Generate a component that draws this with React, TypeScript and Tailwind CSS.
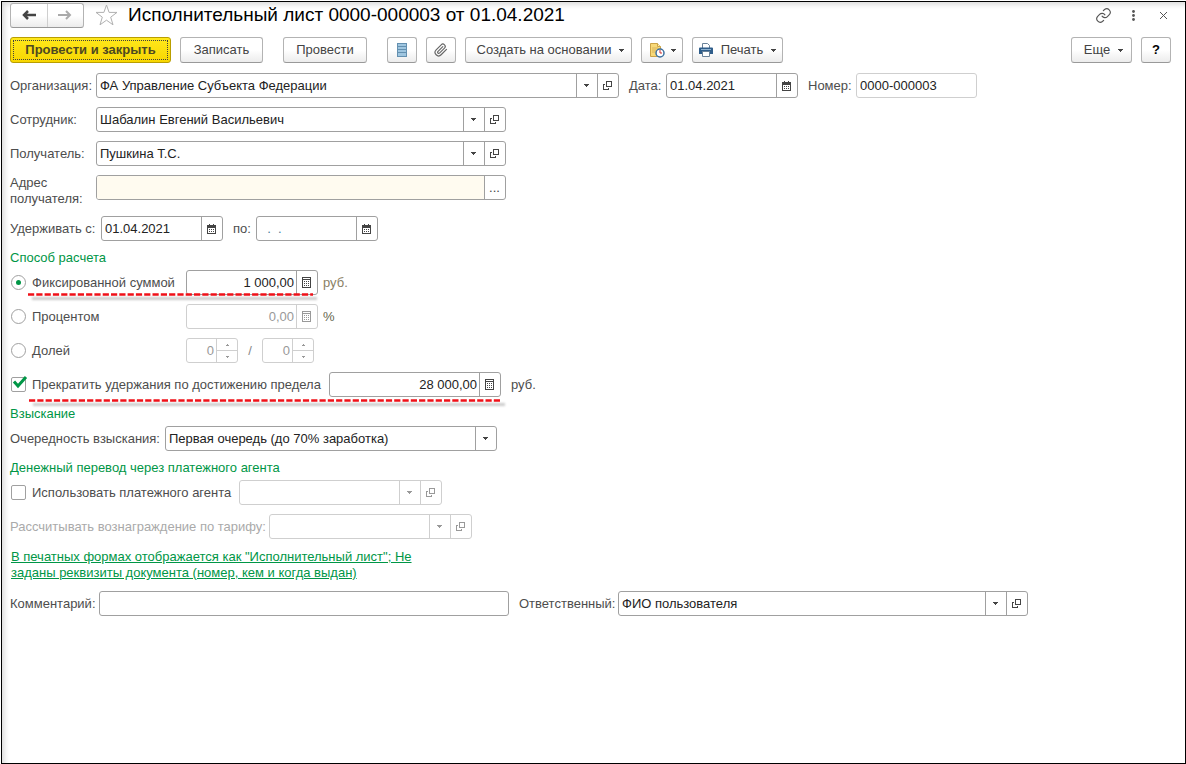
import { useState } from 'react'
import type { ReactNode } from 'react'

function Caret() {
  return (
    <svg width="5" height="3" viewBox="0 0 5 3" fill="currentColor" shapeRendering="crispEdges">
      <path d="M0 0h5v1H0zM1 1h3v1H1zM2 2h1v1H2z" />
    </svg>
  )
}

function OpenIcon() {
  return (
    <svg width="10" height="10" viewBox="0 0 10 10" fill="none" stroke="currentColor" shapeRendering="crispEdges">
      <path d="M3.500.500h5v5h-5z" />
      <path d="M2 3.500H.500v5h5V7" />
    </svg>
  )
}

function CalendarIcon() {
  return (
    <svg width="10" height="10" viewBox="0 0 10 10" fill="currentColor" shapeRendering="crispEdges">
      <path d="M0 1h9v9H0zM1 4v5h7V4z" fillRule="evenodd" />
      <path d="M2 0h1v1H2zM6 0h1v1H6z" />
      <path d="M2 5h1v1H2zM4 5h1v1H4zM6 5h1v1H6zM2 7h1v1H2zM4 7h1v1H4zM6 7h1v1H6z" />
    </svg>
  )
}

function CalcIcon() {
  return (
    <svg width="10" height="11" viewBox="0 0 10 11" fill="currentColor" shapeRendering="crispEdges">
      <path d="M0 0h9v11H0zM1 3v7h7V3zM1 1v1h7V1z" fillRule="evenodd" />
      <path d="M2 4h1v1H2zM4 4h1v1H4zM6 4h1v1H6zM2 6h1v1H2zM4 6h1v1H4zM6 6h1v1H6zM2 8h1v1H2zM4 8h1v1H4zM6 8h1v1H6z" />
    </svg>
  )
}

interface FieldProps {
  id: string
  label?: string
  value?: string
  width: string
  disabled?: boolean
  light?: boolean
  inputClass?: string
  children?: ReactNode
}

function Field({ id, label, value = '', width, disabled, light, inputClass = 'px-[3px]', children }: FieldProps) {
  const [text, setText] = useState(value)
  const border = disabled || light ? 'border-[#cfcfcf]' : 'border-[#a0a0a0]'

  return (
    <div className={`flex h-[25px] max-w-full overflow-hidden rounded-[3px] border bg-white ${border} ${disabled ? 'text-[#999]' : 'text-[#222]'} ${width}`}>
      <input
        id={id}
        aria-label={label}
        value={text}
        disabled={disabled}
        onChange={e => setText(e.target.value)}
        className={`min-w-0 flex-1 outline-none ${inputClass}`}
      />
      {children}
    </div>
  )
}

function FieldButton({ title, disabled, children }: { title: string; disabled?: boolean; children: ReactNode }) {
  return (
    <button
      type="button"
      title={title}
      disabled={disabled}
      className={`flex w-[21px] shrink-0 items-center justify-center border-l pr-px ${
        disabled ? 'border-[#cfcfcf] text-[#999]' : 'border-[#a0a0a0] text-[#444]'
      }`}
    >
      {children}
    </button>
  )
}

function RefField(props: FieldProps) {
  return (
    <Field {...props}>
      <FieldButton title="Выбрать из списка" disabled={props.disabled}><Caret /></FieldButton>
      <FieldButton title="Открыть" disabled={props.disabled}><OpenIcon /></FieldButton>
    </Field>
  )
}

function DateField(props: FieldProps) {
  return (
    <Field {...props}>
      <FieldButton title="Календарь"><CalendarIcon /></FieldButton>
    </Field>
  )
}

function SumField(props: FieldProps) {
  return (
    <Field {...props} inputClass="pr-[2px] text-right">
      <FieldButton title="Калькулятор" disabled={props.disabled}><CalcIcon /></FieldButton>
    </Field>
  )
}

function SpinField(props: FieldProps) {
  return (
    <Field {...props} inputClass="pr-[2px] text-right">
      <div className="flex w-[21px] shrink-0 flex-col border-l border-[#cfcfcf]">
        <button type="button" title="Больше" disabled className="flex flex-1 items-center justify-center border-b border-[#cfcfcf]">
          <svg width="3" height="2" viewBox="0 0 3 2" fill="currentColor" shapeRendering="crispEdges">
            <path d="M1 0h1v1H1zM0 1h3v1H0z" />
          </svg>
        </button>
        <button type="button" title="Меньше" disabled className="flex flex-1 items-center justify-center">
          <svg width="3" height="2" viewBox="0 0 3 2" fill="currentColor" shapeRendering="crispEdges">
            <path d="M0 0h3v1H0zM1 1h1v1H1z" />
          </svg>
        </button>
      </div>
    </Field>
  )
}

function ToolButton({ title, width, children }: { title?: string; width: string; children: ReactNode }) {
  return (
    <button
      type="button"
      title={title}
      className={`flex h-[26px] shrink-0 items-center justify-center rounded-[3px] border border-[#b3b3b3] border-b-[#999] bg-linear-to-b from-white from-50% to-[#ececec] text-[#444] ${width}`}
    >
      {children}
    </button>
  )
}

function Radio({ id, checked, onChange, children }: { id: string; checked: boolean; onChange: () => void; children: ReactNode }) {
  return (
    <div className="flex w-[176px] shrink-0 items-center gap-[6px] pl-px">
      <input
        type="radio"
        id={id}
        name="method"
        checked={checked}
        onChange={onChange}
        className="grid size-[15px] shrink-0 appearance-none place-content-center rounded-full border border-[#a0a0a0] bg-white before:size-[5px] before:rounded-full checked:before:bg-[#009646]"
      />
      <label htmlFor={id}>{children}</label>
    </div>
  )
}

function Check({ id, checked, onChange, children }: { id: string; checked: boolean; onChange: (v: boolean) => void; children: ReactNode }) {
  return (
    <div className="flex shrink-0 items-center gap-[6px] pl-px">
      <span className="relative flex">
        <input
          type="checkbox"
          id={id}
          checked={checked}
          onChange={e => onChange(e.target.checked)}
          className="size-[15px] appearance-none rounded-[2px] border border-[#a0a0a0] bg-white"
        />
        {checked && (
          <svg className="pointer-events-none absolute left-0 -top-px" width="17" height="14" viewBox="0 0 17 14" fill="none" stroke="#009646" strokeWidth="3">
            <path d="M3 5.500l4 4.500 8-9" />
          </svg>
        )}
      </span>
      <label htmlFor={id}>{children}</label>
    </div>
  )
}

// red dashed marker under an important row
function Marker({ className }: { className: string }) {
  return (
    <div className={`pointer-events-none absolute ${className}`}>
      <div className="absolute top-1 left-1 h-[3px] w-full bg-black/20 blur-[1px]" />
      <svg className="relative block h-[3px] w-full">
        <line x1="0" y1="1.5" x2="100%" y2="1.5" stroke="#f01018" strokeWidth="2.500" strokeDasharray="6.200 2.100" />
      </svg>
    </div>
  )
}

function Heading({ children }: { children: ReactNode }) {
  return <h2 className="-mb-[5px] text-[#009646]">{children}</h2>
}

const row = 'flex items-center'

export default function App() {
  const [method, setMethod] = useState('fixed')
  const [stopAtLimit, setStopAtLimit] = useState(true)
  const [useAgent, setUseAgent] = useState(false)

  return (
    <div className="flex min-h-screen bg-white pt-px pl-px font-['Liberation_Sans',Arial,sans-serif] text-[13px] leading-4 text-[#4d4d4d]">
      <main className="flex-1 border border-black pr-[14px] pb-4 pl-2 pt-px shadow-[inset_6px_6px_6px_-4px_#d4d4d4]">
        <header className="flex h-6 items-center">
          <div className="flex h-[25px] w-[74px] shrink-0 rounded-[3px] border border-[#b3b3b3] border-b-[#999] bg-linear-to-b from-white from-50% to-[#ececec]">
            <button type="button" title="Назад" className="flex flex-1 items-center justify-center border-r border-[#cfcfcf] text-[#444]">
              <svg width="14" height="10" viewBox="0 0 14 10" fill="none" stroke="currentColor" strokeWidth="2.500">
                <path d="M14 5H2M6 1L2 5l4 4" />
              </svg>
            </button>
            <button type="button" title="Вперед" className="flex flex-1 items-center justify-center text-[#aaa]">
              <svg width="14" height="10" viewBox="0 0 14 10" fill="none" stroke="currentColor" strokeWidth="2">
                <path d="M0 5h12M8 1l4 4-4 4" />
              </svg>
            </button>
          </div>
          <button type="button" title="В избранное" className="ml-[11px] shrink-0">
            <svg width="23" height="22" viewBox="0 0 23 22" fill="#fff" stroke="#b0b0b0" strokeWidth="1">
              <path d="M11.500 1l2.600 7.400h7.900l-6.300 4.800 2.300 7.600-6.500-4.600-6.500 4.600 2.300-7.600L1 8.400h7.900z" />
            </svg>
          </button>
          <h1 className="ml-[10px] flex-1 text-[19px] leading-6 text-black">Исполнительный лист 0000-000003 от 01.04.2021</h1>
          <div className="flex items-center text-[#555]">
            <button type="button" title="Получить ссылку" className="mr-5">
              <svg width="17" height="17" viewBox="0 0 24 24" fill="none" stroke="currentColor" strokeWidth="1.600" strokeLinecap="round">
                <path d="M10 13a5 5 0 0 0 7.500.500l3-3a5 5 0 0 0-7-7l-1.700 1.700" />
                <path d="M14 11a5 5 0 0 0-7.500-.500l-3 3a5 5 0 0 0 7 7l1.700-1.700" />
              </svg>
            </button>
            <button type="button" title="Дополнительно" className="mr-[25px]">
              <svg width="3" height="11" viewBox="0 0 3 11" fill="currentColor">
                <circle cx="1.500" cy="1.500" r="1.400" />
                <circle cx="1.500" cy="5.500" r="1.400" />
                <circle cx="1.500" cy="9.500" r="1.400" />
              </svg>
            </button>
            <button type="button" title="Закрыть" className="mr-1">
              <svg width="7" height="7" viewBox="0 0 7 7" stroke="currentColor">
                <path d="M0 0l7 7M7 0L0 7" />
              </svg>
            </button>
          </div>
        </header>

        <div className="mt-[10px] flex flex-wrap items-center gap-[9px]">
          <button
            type="button"
            className="flex h-[26px] w-[161px] shrink-0 rounded-[3px] border border-[#b99e00] bg-linear-to-b from-[#ffe81a] to-[#f8d600] p-[2px] font-bold text-[#4d4820]"
          >
            <span className="flex h-full w-full items-center justify-center border border-dotted border-[#404040]">Провести и закрыть</span>
          </button>
          <ToolButton width="w-[83px]">Записать</ToolButton>
          <div className="ml-[11px]">
            <ToolButton width="w-[84px]">Провести</ToolButton>
          </div>
          <div className="ml-[11px]">
            <ToolButton title="Список" width="w-[30px]">
              <svg width="10" height="14" viewBox="0 0 10 14" shapeRendering="crispEdges">
                <path fill="#9fc6e0" d="M0 0h10v14H0z" />
                <path fill="#6490b0" d="M0 0h10v1H0zM0 3h10v1H0zM0 6h10v1H0zM0 9h10v1H0zM0 13h10v1H0zM0 0h1v14H0zM9 0h1v14H9z" />
              </svg>
            </ToolButton>
          </div>
          <ToolButton title="Присоединенные файлы" width="w-[30px]">
            <svg width="14" height="14" viewBox="0 0 24 24" fill="none" stroke="#666" strokeWidth="2" strokeLinecap="round">
              <path d="M21.400 11l-9.200 9.200a6 6 0 0 1-8.500-8.500l8.600-8.600a4 4 0 1 1 5.700 5.700l-8.600 8.600a2 2 0 0 1-2.800-2.800l8.500-8.500" />
            </svg>
          </ToolButton>
          <ToolButton width="w-[167px]">
            <span className="mr-2 ml-1">Создать на основании</span>
            <Caret />
          </ToolButton>
          <ToolButton title="Напоминание" width="w-[42px]">
            <svg className="mr-[6px]" width="16" height="15" viewBox="0 0 16 15">
              <path d="M1.500.500h7l3 3v10h-10z" fill="#f8d978" stroke="#cba347" />
              <path d="M8.500.500v3h3" fill="#fff1b8" stroke="#cba347" />
              <path d="M3 5h6M3 7h4M3 9h3" stroke="#d8b45a" />
              <circle cx="11" cy="10" r="4" fill="#fff" stroke="#3d6f9e" strokeWidth="1.500" />
              <path d="M11 7v3h2" fill="none" stroke="#cc3030" />
            </svg>
            <Caret />
          </ToolButton>
          <ToolButton width="w-[91px]">
            <svg className="mr-2" width="14" height="14" viewBox="0 0 14 14">
              <path d="M3.500 5V.500h5l2 2V5" fill="#fff" stroke="#6a8299" />
              <path d="M1 4.500h12a1 1 0 0 1 1 1V11H0V5.500a1 1 0 0 1 1-1z" fill="#2f5d8a" />
              <path d="M2 6.500h10" stroke="#8fb3d1" />
              <path d="M3.500 8.500h7v5h-7z" fill="#fff" stroke="#6a8299" />
            </svg>
            <span className="mr-2">Печать</span>
            <Caret />
          </ToolButton>
          <div className="ml-auto flex gap-[9px]">
            <ToolButton width="w-[61px]">
              <span className="mr-2 ml-1">Еще</span>
              <Caret />
            </ToolButton>
            <ToolButton title="Справка" width="w-[30px]">
              <span className="font-bold text-black">?</span>
            </ToolButton>
          </div>
        </div>

        <form className="mt-[10px] flex flex-col gap-[9px]" onSubmit={e => e.preventDefault()}>
          <div className={row}>
            <label htmlFor="org" className="w-[86px] shrink-0">Организация:</label>
            <RefField id="org" value="ФА Управление Субъекта Федерации" width="w-[523px]" />
            <label htmlFor="date" className="ml-[10px] w-[37px] shrink-0">Дата:</label>
            <DateField id="date" value="01.04.2021" width="w-[132px]" />
            <label htmlFor="number" className="ml-[10px] w-[48px] shrink-0">Номер:</label>
            <Field id="number" value="0000-000003" width="w-[121px]" light />
          </div>

          <div className={row}>
            <label htmlFor="employee" className="w-[86px] shrink-0">Сотрудник:</label>
            <RefField id="employee" value="Шабалин Евгений Васильевич" width="w-[410px]" />
          </div>

          <div className={row}>
            <label htmlFor="recipient" className="w-[86px] shrink-0">Получатель:</label>
            <RefField id="recipient" value="Пушкина Т.С." width="w-[410px]" />
          </div>

          <div className="flex items-start">
            <label htmlFor="address" className="w-[86px] shrink-0">Адрес<br />получателя:</label>
            <Field id="address" width="w-[410px]" inputClass="bg-[#fffbf0] px-[3px]">
              <FieldButton title="Выбрать">...</FieldButton>
            </Field>
          </div>

          <div className={row}>
            <label htmlFor="from" className="w-[91px] shrink-0">Удерживать с:</label>
            <DateField id="from" value="01.04.2021" width="w-[122px]" />
            <label htmlFor="to" className="ml-[10px] w-[23px] shrink-0">по:</label>
            <DateField id="to" value="  .  ." width="w-[122px]" inputClass="px-[3px] whitespace-pre text-[#4a7f9c]" />
          </div>

          <Heading>Способ расчета</Heading>

          <div className={`relative ${row}`}>
            <Radio id="fixed" checked={method === 'fixed'} onChange={() => setMethod('fixed')}>Фиксированной суммой</Radio>
            <SumField id="fixed-sum" label="Фиксированная сумма" value="1 000,00" width="w-[132px]" />
            <span className="ml-[5px] text-[#8a7f66]">руб.</span>
            <Marker className="left-[18px] top-[23px] w-[285px]" />
          </div>

          <div className={row}>
            <Radio id="percent" checked={method === 'percent'} onChange={() => setMethod('percent')}>Процентом</Radio>
            <SumField id="percent-value" label="Процент" value="0,00" width="w-[132px]" disabled />
            <span className="ml-[5px] text-[#66664d]">%</span>
          </div>

          <div className={row}>
            <Radio id="share" checked={method === 'share'} onChange={() => setMethod('share')}>Долей</Radio>
            <SpinField id="share-top" label="Числитель" value="0" width="w-[52px]" disabled />
            <span className="w-6 text-center text-[#888]">/</span>
            <SpinField id="share-bottom" label="Знаменатель" value="0" width="w-[52px]" disabled />
          </div>

          <div className={`relative ${row}`}>
            <div className="w-[319px] shrink-0">
              <Check id="limit" checked={stopAtLimit} onChange={setStopAtLimit}>Прекратить удержания по достижению предела</Check>
            </div>
            <SumField id="limit-sum" label="Предел" value="28 000,00" width="w-[172px]" />
            <span className="ml-[10px]">руб.</span>
            <Marker className="left-[19px] top-[27px] w-[472px]" />
          </div>

          <Heading>Взыскание</Heading>

          <div className={row}>
            <label htmlFor="order" className="w-[155px] shrink-0">Очередность взыскания:</label>
            <div className="relative flex h-[25px] w-[332px] max-w-full rounded-[3px] border border-[#a0a0a0] text-[#222]">
              <select id="order" defaultValue="1" className="w-full appearance-none px-[3px] outline-none">
                <option value="1">Первая очередь (до 70% заработка)</option>
              </select>
              <span className="pointer-events-none absolute inset-y-0 right-0 flex w-[21px] items-center justify-center border-l border-[#a0a0a0] pr-px text-[#444]">
                <Caret />
              </span>
            </div>
          </div>

          <Heading>Денежный перевод через платежного агента</Heading>

          <div className={row}>
            <div className="w-[229px] shrink-0">
              <Check id="agent" checked={useAgent} onChange={setUseAgent}>Использовать платежного агента</Check>
            </div>
            <RefField id="agent-name" label="Платежный агент" width="w-[203px]" disabled />
          </div>

          <div className={row}>
            <label htmlFor="tariff" className="w-[259px] shrink-0 text-[#aaa]">Рассчитывать вознаграждение по тарифу:</label>
            <RefField id="tariff" width="w-[203px]" disabled />
          </div>

          <a href="#requisites" className="my-px ml-px w-[420px] max-w-full text-[#009646] underline">
            В печатных формах отображается как "Исполнительный лист"; Не заданы реквизиты документа (номер, кем и когда выдан)
          </a>

          <div className={row}>
            <label htmlFor="comment" className="w-[89px] shrink-0">Комментарий:</label>
            <Field id="comment" width="w-[410px]" />
            <label htmlFor="responsible" className="ml-[10px] w-[99px] shrink-0">Ответственный:</label>
            <RefField id="responsible" value="ФИО пользователя" width="w-[410px]" />
          </div>
        </form>
      </main>
    </div>
  )
}
